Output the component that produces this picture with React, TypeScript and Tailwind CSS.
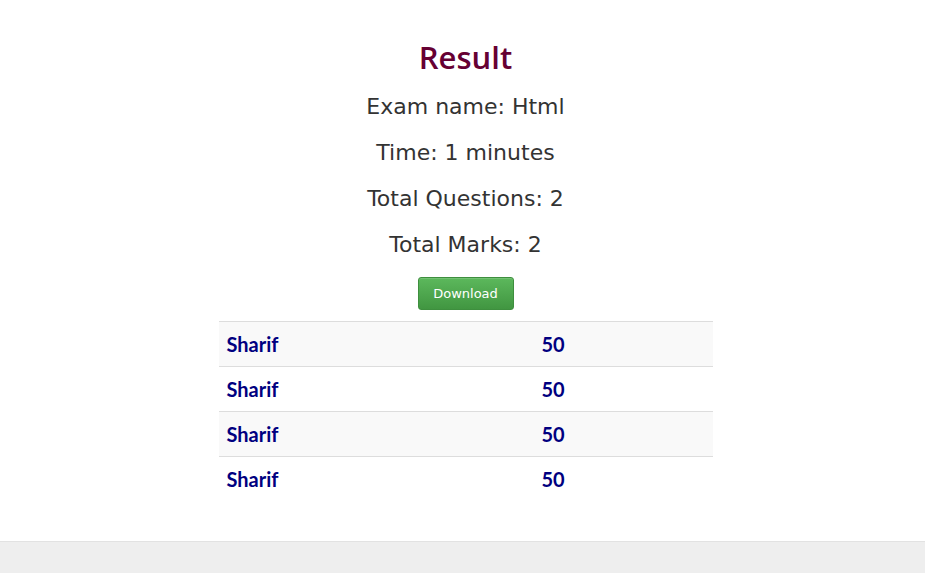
const ROWS = [
  { name: "Sharif", score: 50 },
  { name: "Sharif", score: 50 },
  { name: "Sharif", score: 50 },
  { name: "Sharif", score: 50 },
];

const INFO = ["Exam name: Html", "Time: 1 minutes", "Total Questions: 2", "Total Marks: 2"];

export default function App() {
  return (
    <div className="min-h-[573px] bg-[#eeeeee] font-['DejaVu_Sans',sans-serif]">
      {/* main panel */}
      <div className="h-[542px] border-b border-[#e2e2e2] bg-white pt-[36px]">
        <div className="mx-auto w-[494px] translate-x-[3px]">
          <h2 className="h-[42px] text-center font-['Open_Sans',sans-serif] text-[31px] font-semibold leading-[42px] text-[#660033]">
            Result
          </h2>
          <div className="mt-[6px]">
            {INFO.map((line) => (
              <p key={line} className="h-[46px] text-center text-[22px] leading-[46px] text-[#333333]">
                {line}
              </p>
            ))}
          </div>
          <div className="mt-[9px] flex justify-center">
            <button className="h-[33px] w-[96px] rounded-[3px] border border-[#3e8f3e] bg-gradient-to-b from-[#5cb85c] to-[#419641] text-[13px] text-white shadow-[inset_0_1px_0_rgba(255,255,255,0.15)]">
              Download
            </button>
          </div>
          <table className="mt-[11px] w-full border-collapse font-['Lato',sans-serif]">
            <tbody>
              {ROWS.map((r, i) => (
                <tr key={i} className={i % 2 === 0 ? "bg-[#f9f9f9]" : "bg-white"}>
                  <td className="h-[45px] w-[315px] border-t border-[#dddddd] px-2 text-[20px] font-bold text-[#000080]">
                    {r.name}
                  </td>
                  <td className="h-[45px] border-t border-[#dddddd] px-2 text-[20px] font-bold text-[#000080]">
                    {r.score}
                  </td>
                </tr>
              ))}
            </tbody>
          </table>
        </div>
      </div>
    </div>
  );
}
